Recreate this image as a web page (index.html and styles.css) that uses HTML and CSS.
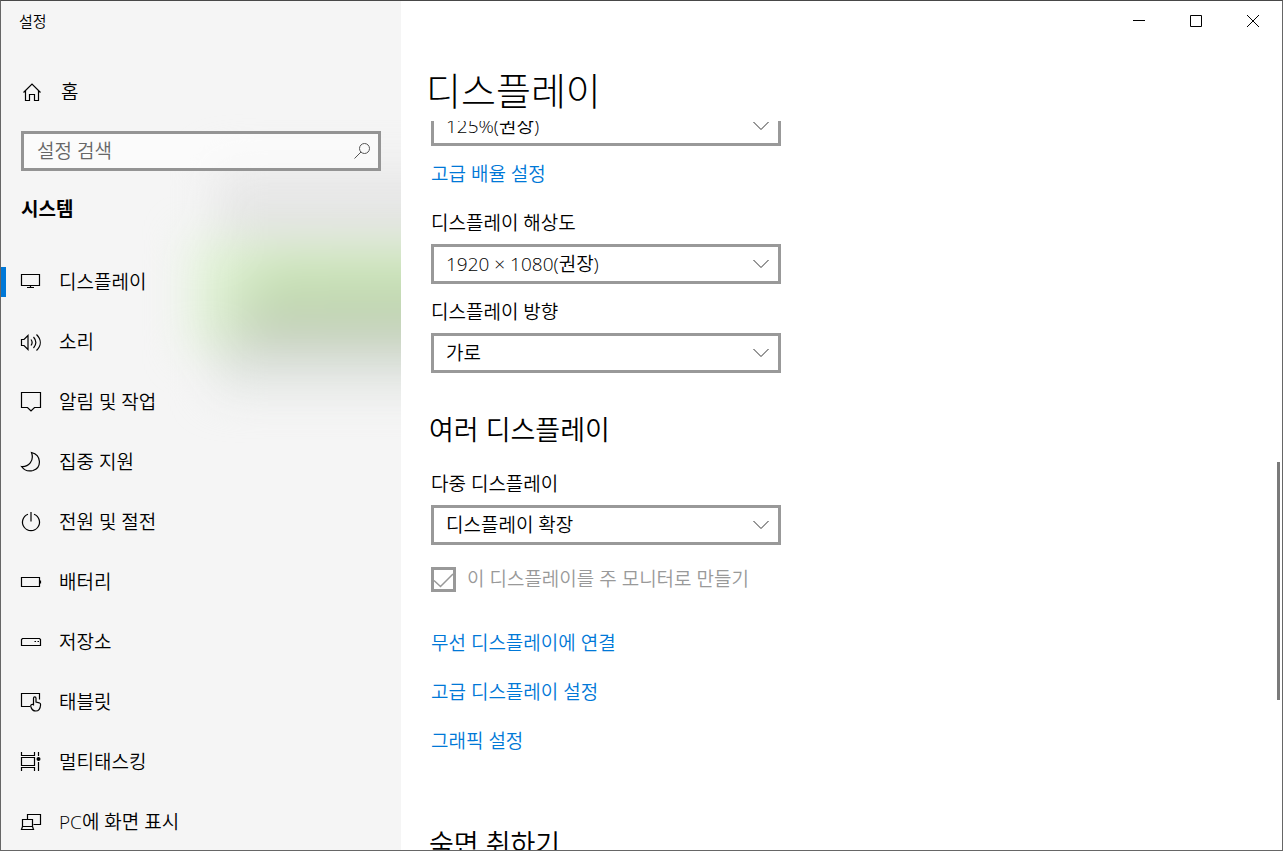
FILE: index.html
```html
<!DOCTYPE html>
<html lang="ko">
<head>
    <meta charset="UTF-8">
    <meta name="viewport" content="width=device-width, initial-scale=1.0">
    <title>설정</title>
    <link rel="stylesheet" href="styles.css">
</head>
<body>
    <div class="window">
        <aside class="sidebar">
            <div class="glow" aria-hidden="true"></div>
            <div class="app-title">설정</div>
            <a class="home" href="#">
                <svg class="icon" viewBox="0 0 22 22"><path d="M2.500 11.500L11 3l8.500 8.500M4.500 10v9.500h4v-6h5v6h4V10"/></svg>
                <span>홈</span>
            </a>
            <div class="search">
                <input type="text" placeholder="설정 검색" aria-label="설정 검색">
                <svg viewBox="0 0 18 18"><circle cx="11.500" cy="6.500" r="5"/><path d="M8 10l-6.500 6.500"/></svg>
            </div>
            <h2 class="group">시스템</h2>
            <nav>
                <a class="active" href="#">
                    <svg class="icon" viewBox="0 0 22 22"><path d="M1.500 3.500h18v11h-18zM10.500 14.500v2.500M7 16.500h7"/></svg>
                    <span>디스플레이</span>
                </a>
                <a href="#">
                    <svg class="icon" viewBox="0 0 22 22"><path d="M1.500 8.500h2.500l4-4v14l-4-4H1.500zM11 8.500c1.500 2 1.500 4 0 6M13.500 6c3 3.500 3 7.500 0 11M16.500 3.500c5 5 5 11 0 16"/></svg>
                    <span>소리</span>
                </a>
                <a href="#">
                    <svg class="icon" viewBox="0 0 22 22"><path d="M1.500 1.500h19v15h-6L11 20l-3.500-3.500h-6z"/></svg>
                    <span>알림 및 작업</span>
                </a>
                <a href="#">
                    <svg class="icon" viewBox="0 0 22 22"><path d="M11.500 1.500c10 2.500 10.500 15 1.500 18C8.500 20.700 4 19 1.500 15.500c7 .5 13-5.500 10-14z"/></svg>
                    <span>집중 지원</span>
                </a>
                <a href="#">
                    <svg class="icon" viewBox="0 0 22 22"><path d="M8 3.200a8.500 8.500 0 1 0 6 0M11 1v9.500"/></svg>
                    <span>전원 및 절전</span>
                </a>
                <a href="#">
                    <svg class="icon" viewBox="0 0 22 22"><path d="M1.500 6.500h18v9h-18zM20.500 9.500v3"/></svg>
                    <span>배터리</span>
                </a>
                <a href="#">
                    <svg class="icon" viewBox="0 0 22 22"><path d="M2.500 7.500h17l1 1v6h-19v-6zM14.500 10.500h1.500M17.500 10.500H19"/></svg>
                    <span>저장소</span>
                </a>
                <a href="#">
                    <svg class="icon" viewBox="0 0 22 22"><path d="M10 15.500H1.500v-13h18v6M13.500 14.500V7.300c0-1.800 2.500-1.800 2.500 0V11l3.200.8c1 .3 1.500.9 1.400 1.900-.3 4-1.400 6.300-4.800 6.300-3 0-4.300-1.700-5-4.500-.4-1.800.7-2.500 2.700-2"/></svg>
                    <span>태블릿</span>
                </a>
                <a href="#">
                    <svg class="icon" viewBox="0 0 22 22"><path d="M1.500 1v3.500h13V1M1.500 6.500h13v8h-13zM1.500 20v-3.500h13V20M18.500 1v4M18.500 11v9"/><circle class="dot" cx="18.500" cy="8" r="2"/></svg>
                    <span>멀티태스킹</span>
                </a>
                <a href="#">
                    <svg class="icon" viewBox="0 0 22 22"><path d="M7.500 8.500v-5h13v10h-7M2.500 8.500h10v7h-10zM2.500 15.500l-1 3h12l-1-3"/></svg>
                    <span>PC에 화면 표시</span>
                </a>
            </nav>
        </aside>

        <main>
            <div class="caption">
                <button type="button" aria-label="최소화"><svg viewBox="0 0 12 12"><path d="M0 5.500h12"/></svg></button>
                <button type="button" aria-label="최대화"><svg viewBox="0 0 12 12"><path d="M.5.500h11v11H.5z"/></svg></button>
                <button type="button" aria-label="닫기"><svg viewBox="0 0 12 12"><path d="M0 0l12 12M12 0L0 12"/></svg></button>
            </div>
            <h1>디스플레이</h1>
            <div class="content">
                <div class="select first">
                    <select aria-label="배율">
                        <option>125%(권장)</option>
                    </select>
                    <svg viewBox="0 0 16 10"><path d="M.5 1L8 8.500 15.500 1"/></svg>
                </div>
                <a class="link scale-link" href="#">고급 배율 설정</a>

                <div class="field resolution">
                    <label for="resolution">디스플레이 해상도</label>
                    <div class="select">
                        <select id="resolution">
                            <option>1920 × 1080(권장)</option>
                        </select>
                        <svg viewBox="0 0 16 10"><path d="M.5 1L8 8.500 15.500 1"/></svg>
                    </div>
                </div>
                <div class="field">
                    <label for="orientation">디스플레이 방향</label>
                    <div class="select">
                        <select id="orientation">
                            <option>가로</option>
                        </select>
                        <svg viewBox="0 0 16 10"><path d="M.5 1L8 8.500 15.500 1"/></svg>
                    </div>
                </div>

                <h2>여러 디스플레이</h2>
                <div class="field multiple">
                    <label for="multiple">다중 디스플레이</label>
                    <div class="select">
                        <select id="multiple">
                            <option>디스플레이 확장</option>
                        </select>
                        <svg viewBox="0 0 16 10"><path d="M.5 1L8 8.500 15.500 1"/></svg>
                    </div>
                </div>
                <div class="check">
                    <div class="box">
                        <input type="checkbox" id="primary" checked disabled>
                        <svg viewBox="0 0 25 25"><path d="M3 13.500l6.500 6L22 7"/></svg>
                    </div>
                    <label for="primary">이 디스플레이를 주 모니터로 만들기</label>
                </div>
                <div class="links">
                    <a class="link" href="#">무선 디스플레이에 연결</a>
                    <a class="link" href="#">고급 디스플레이 설정</a>
                    <a class="link" href="#">그래픽 설정</a>
                </div>

                <h2 class="sleep">숙면 취하기</h2>
            </div>
            <div class="scrollbar"></div>
        </main>
    </div>
</body>
</html>
```
FILE: styles.css
```css
* {
    box-sizing: border-box;
}
body {
    margin: 0;
    font-family: "Open Sans", "Noto Sans CJK KR", sans-serif;
    font-size: 19px;
    font-weight: 350;
    line-height: 28px;
    color: #000;
}
a {
    color: inherit;
    text-decoration: none;
}
h1, h2 {
    margin: 0;
}
svg {
    display: block;
    fill: none;
    stroke: #000;
}
.window {
    display: grid;
    grid-template-columns: 400px 1fr;
    height: 100vh;
    border: 1px solid #666;
    border-top-color: #484848;
    overflow: hidden;
}

/* left pane */
.sidebar {
    position: relative;
    z-index: 0;
    min-height: 0;
    background: #f5f5f5;
    overflow: hidden;
}
.glow {
    position: absolute;
    z-index: -1;
    top: 165px;
    left: 215px;
    right: -60px;
    height: 225px;
    background: linear-gradient(#e9e9e9, #e4e4e4 30%, #d8dcd8 75%, #e4e8e5);
    filter: blur(22px);
}
.glow::after {
    content: "";
    position: absolute;
    top: 74px;
    left: -26px;
    right: 0;
    height: 110px;
    background: linear-gradient(100deg, #e2f3d8 8%, rgba(226, 243, 216, 0) 32%), linear-gradient(#dcefcf, #c5dfb2 40%, #c0d2b3 70%, #ccd2c6);
}
.app-title {
    padding-left: 18px;
    font-size: 15px;
    line-height: 40px;
}
.home {
    display: flex;
    align-items: center;
    gap: 18px;
    height: 60px;
    margin-top: 21px;
    padding-left: 20px;
}
.icon {
    flex: none;
    width: 22px;
    height: 22px;
    stroke-width: 1.2;
}
.icon .dot {
    fill: #000;
    stroke: none;
}
.search {
    position: relative;
    margin: 9px 20px 0;
}
.search input {
    display: block;
    width: 100%;
    height: 40px;
    padding: 0 44px 0 13px;
    border: 3px solid #949494;
    border-radius: 0;
    background: rgba(255, 255, 255, 0.6);
    font: inherit;
}
.search input::placeholder {
    color: #666;
    opacity: 1;
}
.search svg {
    position: absolute;
    top: 11px;
    right: 10px;
    width: 18px;
    height: 18px;
    stroke: #555;
}
.group {
    margin-top: 24px;
    padding-left: 20px;
    font-size: 19px;
    font-weight: 700;
}
.sidebar nav {
    margin-top: 29px;
}
.sidebar nav a {
    position: relative;
    display: flex;
    align-items: center;
    gap: 17px;
    height: 60px;
    padding-left: 19px;
}
.sidebar nav a.active::before {
    content: "";
    position: absolute;
    left: 0;
    width: 5px;
    height: 30px;
    background: #0078d7;
}

/* right pane */
main {
    position: relative;
    display: flex;
    flex-direction: column;
    min-width: 0;
    min-height: 0;
    background: #fff;
}
.caption {
    display: flex;
    flex: none;
    justify-content: flex-end;
    height: 40px;
}
.caption button {
    display: flex;
    align-items: center;
    justify-content: center;
    width: 57px;
    padding: 0 1px 0 0;
    border: none;
    background: none;
}
.caption svg {
    width: 12px;
    height: 12px;
}
h1 {
    flex: none;
    margin-top: 25px;
    padding-left: 25px;
    font-size: 38px;
    font-weight: 300;
    line-height: 48px;
}
.content {
    flex: 1;
    min-height: 0;
    margin-top: 7px;
    padding-left: 30px;
    overflow: hidden;
}
.content h2 {
    margin-top: 39px;
    margin-left: -2px;
    font-size: 27px;
    font-weight: 350;
    line-height: 36px;
}
.select {
    position: relative;
    max-width: 350px;
}
.select.first {
    margin-top: -15px;
}
.select select {
    display: block;
    appearance: none;
    width: 100%;
    height: 40px;
    padding: 0 40px 0 12px;
    border: 3px solid #999;
    border-radius: 0;
    background: #fff;
    color: #000;
    font: inherit;
}
.select svg {
    position: absolute;
    top: 15px;
    right: 12px;
    width: 16px;
    height: 10px;
    stroke: #333;
    pointer-events: none;
}
.link {
    display: block;
    width: fit-content;
    color: #0078d7;
}
.scale-link {
    margin-top: 14px;
}
.field {
    margin-top: 14px;
}
.field.resolution {
    margin-top: 21px;
}
.field.multiple {
    margin-top: 22px;
}
.field label {
    display: block;
    margin-bottom: 7px;
}
.check {
    display: flex;
    align-items: center;
    gap: 11px;
    margin-top: 20px;
    color: #999;
}
.box {
    position: relative;
    width: 25px;
    height: 25px;
}
.box input {
    display: block;
    appearance: none;
    width: 25px;
    height: 25px;
    margin: 0;
    border: 3px solid #999;
}
.box svg {
    position: absolute;
    top: 0;
    left: 0;
    width: 25px;
    height: 25px;
    stroke: #999;
    stroke-width: 1.5;
}
.links {
    display: grid;
    gap: 21px;
    margin-top: 36px;
}
.content .sleep {
    margin-top: 71px;
}
.scrollbar {
    position: absolute;
    top: 461px;
    right: 2px;
    width: 3px;
    height: 238px;
    background: #7a7a7a;
}
```
